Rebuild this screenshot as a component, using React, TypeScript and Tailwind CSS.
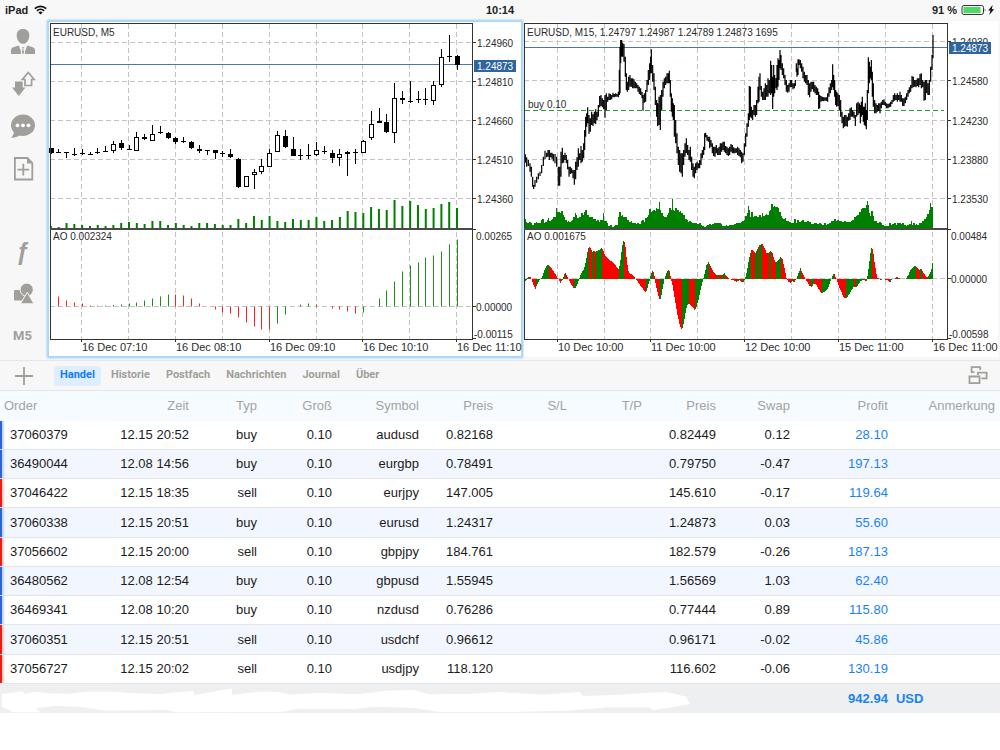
import type { ReactNode } from "react";

type Candle = [open: number, close: number, high: number, low: number, up?: boolean];

// M5 candles, canvas units (3 units = 1px), y measured from the top
const candles: Candle[] = [
    [443, 458, 443, 461], [457, 457, 448, 460], [457, 461, 457, 473], [461, 461, 445, 467],
    [459, 459, 447, 466], [461, 461, 456, 466], [455, 455, 445, 461], [452, 456, 437, 456],
    [433, 450, 424, 458, true], [429, 444, 419, 449], [446, 450, 434, 450], [411, 450, 396, 452, true],
    [410, 416, 401, 421], [401, 418, 376, 419, true], [397, 397, 378, 403], [399, 413, 396, 418],
    [414, 426, 411, 431], [423, 423, 411, 429], [426, 443, 424, 446], [446, 453, 435, 459],
    [451, 454, 451, 466], [450, 458, 450, 476], [460, 460, 452, 470], [463, 473, 446, 474],
    [478, 561, 474, 563], [529, 559, 529, 560, true], [517, 523, 507, 568, true], [499, 515, 478, 521, true],
    [458, 496, 448, 497, true], [406, 455, 394, 456, true], [409, 443, 390, 445], [447, 467, 410, 468],
    [466, 466, 448, 480], [464, 464, 433, 477], [451, 463, 425, 467, true], [452, 456, 439, 461],
    [458, 473, 451, 489], [463, 473, 448, 497, true], [455, 462, 454, 527], [455, 455, 448, 491],
    [423, 456, 419, 459, true], [373, 412, 333, 419, true], [363, 368, 325, 368], [367, 398, 343, 399],
    [295, 398, 249, 430, true], [295, 301, 273, 312], [304, 304, 244, 310], [297, 301, 273, 310],
    [298, 298, 264, 316], [254, 298, 244, 315, true], [171, 253, 147, 260, true], [168, 168, 106, 186],
    [169, 195, 166, 210],
];

const m5Volume = [
    3, 2, 6, 5, 4, 3, 4, 3, 4, 6, 7, 6, 5, 8, 8, 4, 6, 4, 3, 6, 6, 5, 4, 4, 10, 6, 13, 9, 13, 8, 7, 10,
    9, 9, 12, 8, 9, 12, 18, 17, 16, 22, 20, 19, 29, 23, 28, 24, 20, 21, 25, 27, 21,
];

const m5Ao = [
    0, 10, 6, 4, 3, 1, 0.8, 1, 1.5, 2, 3, 4, 6, 8, 10, 12, 11.9, 11, 8, 3, 0, -3, -6, -7, -11, -16, -20,
    -23, -23.1, -17, -8, 0, 2, 3, 2, 0, -2, -3, -5, -7, -6, 0, 8, 16, 25, 35, 41, 44, 49, 51, 55, 62, 67,
];

// M15 price range, flat [x, high, low] triples
const m15Early = [
    16, 403, 428, 20, 412, 440, 25, 420, 438, 30, 430, 455, 34, 440, 470, 38, 470, 500, 41, 495, 507,
    45, 480, 500, 50, 470, 488, 55, 460, 478, 60, 455, 468, 65, 435, 460, 70, 410, 438, 75, 392, 418,
    80, 398, 412, 84, 390, 410, 88, 390, 420, 92, 398, 412, 96, 398, 416, 100, 402, 424, 105, 402, 430,
    110, 410, 440, 115, 440, 497, 119, 440, 497, 123, 395, 470, 127, 383, 430, 131, 405, 428,
    135, 398, 420, 139, 405, 430, 143, 420, 448, 147, 440, 470, 151, 440, 462, 155, 445, 460,
    159, 450, 475, 163, 450, 494, 167, 425, 478, 171, 412, 450, 175, 385, 440, 179, 400, 420,
    183, 378, 430, 187, 390, 425, 191, 370, 415, 194, 330, 390, 197, 290, 350, 200, 280, 320,
    203, 262, 310, 207, 285, 342, 211, 295, 335, 215, 275, 315, 219, 283, 318, 223, 275, 310,
    227, 268, 312, 231, 275, 300, 235, 255, 290, 239, 228, 262, 243, 225, 258, 247, 235, 262,
    251, 240, 268, 255, 225, 293, 259, 220, 270, 263, 230, 245, 267, 220, 240, 271, 222, 240,
    275, 225, 238, 279, 218, 232, 283, 222, 232, 287, 220, 230, 291, 222, 230, 295, 215, 232,
    298, 150, 225, 300, 80, 220, 302, 60, 130, 305, 60, 110, 308, 68, 110, 312, 72, 125, 316, 110, 170,
    319, 160, 210, 322, 185, 215, 326, 170, 210, 330, 165, 200, 334, 175, 200, 338, 175, 205,
    342, 178, 205, 346, 185, 205, 350, 190, 205, 354, 195, 215, 358, 200, 222, 362, 205, 225,
    366, 215, 235, 369, 225, 272, 373, 220, 248, 377, 210, 245, 381, 180, 215, 385, 150, 195,
    389, 130, 180, 392, 110, 160, 394, 88, 160, 398, 135, 185, 402, 160, 210, 406, 200, 255,
    410, 240, 290, 413, 250, 318, 417, 230, 315, 421, 225, 330, 425, 210, 270, 429, 185, 230,
    433, 175, 205, 437, 170, 195, 441, 160, 190, 445, 160, 190, 448, 152, 190, 451, 180, 230,
    454, 220, 275, 457, 235, 290, 460, 250, 300, 463, 255, 350, 467, 300, 370, 471, 340, 400,
    475, 380, 435, 479, 390, 455, 483, 400, 460, 487, 400, 470, 491, 390, 435, 495, 370, 410,
    499, 355, 400, 503, 375, 405, 507, 390, 420, 511, 380, 425, 515, 410, 450, 519, 430, 470,
    523, 440, 475, 527, 430, 460, 531, 425, 450, 535, 430, 445, 539, 420, 445, 543, 400, 435,
    547, 390, 415, 551, 380, 405, 554, 340, 390, 557, 338, 352, 561, 345, 362, 565, 350, 365,
    569, 350, 385, 573, 360, 380, 577, 370, 400, 581, 380, 408, 585, 380, 410, 589, 375, 400,
    593, 385, 405, 597, 380, 405, 601, 370, 405, 605, 370, 395, 609, 365, 390, 613, 365, 395,
    617, 378, 400, 621, 380, 405, 625, 385, 408, 629, 380, 405, 633, 372, 395, 637, 375, 400,
    641, 382, 400, 645, 385, 400, 649, 385, 398, 653, 380, 405, 657, 385, 408, 661, 390, 412,
    665, 395, 430, 669, 400, 425, 673, 370, 405, 677, 340, 380, 681, 310, 350, 685, 280, 320,
    688, 198, 300, 691, 200, 290, 694, 260, 295, 698, 270, 300, 702, 255, 285, 706, 255, 290,
    710, 240, 285, 714, 200, 250, 717, 170, 245,
];

const m15Late = [
    30, 220, 270, 34, 258, 290, 38, 275, 300, 42, 265, 300, 46, 250, 300, 50, 255, 290, 54, 235, 290,
    58, 240, 280, 62, 182, 285, 65, 195, 280, 68, 230, 327, 71, 195, 290, 74, 225, 280, 78, 235, 265,
    81, 195, 270, 84, 175, 260, 87, 180, 240, 90, 150, 205, 93, 165, 210, 97, 190, 225, 101, 205, 235,
    105, 225, 255, 109, 240, 275, 113, 255, 278, 117, 250, 275, 121, 240, 262, 125, 240, 262,
    129, 250, 268, 133, 250, 265, 136, 240, 258, 139, 190, 215, 141, 205, 230, 144, 178, 225,
    147, 178, 195, 151, 180, 205, 155, 190, 215, 159, 200, 235, 163, 215, 245, 167, 225, 250,
    171, 225, 255, 175, 240, 285, 179, 250, 292, 183, 245, 275, 187, 245, 268, 191, 245, 275,
    195, 255, 280, 199, 260, 285, 203, 265, 285, 206, 275, 327, 209, 285, 325, 213, 288, 305,
    217, 290, 303, 221, 292, 304, 225, 292, 302, 229, 292, 303, 233, 280, 305, 237, 262, 290,
    241, 250, 280, 245, 240, 270, 248, 193, 262, 251, 225, 270, 254, 240, 290, 257, 270, 315,
    260, 275, 320, 264, 280, 318, 268, 285, 330, 272, 300, 350, 276, 335, 370, 280, 350, 385,
    284, 345, 380, 288, 345, 378, 292, 350, 380, 296, 340, 362, 300, 325, 360, 304, 322, 350,
    308, 330, 350, 312, 335, 355, 316, 345, 378, 320, 310, 350, 324, 305, 345, 328, 310, 340,
    331, 315, 370, 334, 305, 350, 337, 290, 345, 340, 320, 365, 343, 320, 375, 346, 310, 378,
    349, 330, 388, 352, 270, 360, 355, 172, 280, 358, 185, 250, 361, 200, 235, 364, 180, 240,
    367, 215, 290, 370, 250, 320, 374, 300, 340, 378, 310, 340, 382, 315, 335, 386, 310, 332,
    390, 310, 340, 394, 305, 325, 398, 300, 315, 402, 298, 315, 406, 305, 318, 410, 310, 325,
    414, 312, 325, 418, 310, 322, 422, 305, 320, 426, 300, 312, 430, 285, 305, 434, 280, 302,
    438, 285, 300, 442, 280, 305, 446, 285, 300, 450, 275, 305, 454, 285, 305, 458, 295, 318,
    462, 295, 318, 466, 290, 310, 470, 280, 300, 474, 270, 290, 478, 262, 280, 482, 255, 275,
    486, 228, 265, 490, 230, 262, 494, 240, 260, 498, 240, 262, 502, 235, 258, 506, 235, 262,
    510, 222, 255, 514, 220, 265, 518, 240, 262, 522, 245, 302, 526, 240, 300, 530, 240, 280,
    534, 250, 285, 538, 240, 285, 542, 200, 245, 546, 165, 210, 549, 105, 175,
];

// M15 volume, flat [x, top] pairs
const m15VolumeEarly = [
    16, 88, 20, 95, 25, 98, 30, 96, 35, 100, 40, 104, 45, 100, 50, 96, 55, 98, 60, 100, 65, 90, 70, 86,
    74, 98, 78, 96, 82, 90, 86, 84, 90, 92, 94, 90, 98, 86, 102, 82, 106, 80, 110, 55, 114, 65, 118, 66,
    122, 68, 126, 62, 130, 74, 134, 80, 138, 90, 142, 95, 146, 92, 150, 95, 154, 92, 158, 90, 162, 82,
    166, 68, 170, 76, 174, 85, 178, 80, 182, 80, 186, 70, 190, 75, 194, 66, 198, 60, 202, 75, 206, 74,
    210, 82, 214, 80, 218, 82, 222, 86, 226, 88, 230, 92, 234, 90, 238, 96, 242, 90, 246, 90, 251, 68,
    255, 92, 259, 94, 263, 100, 267, 108, 271, 106, 275, 105, 279, 110, 283, 107, 287, 104, 291, 104,
    295, 80, 298, 65, 301, 65, 304, 78, 308, 75, 312, 80, 316, 80, 320, 82, 325, 90, 330, 95, 335, 93,
    340, 100, 345, 98, 350, 103, 355, 99, 360, 102, 365, 94, 370, 90, 374, 96, 378, 84, 382, 80, 386, 74,
    390, 58, 394, 66, 398, 62, 402, 60, 406, 62, 410, 55, 414, 56, 418, 36, 422, 60, 426, 70, 430, 78,
    434, 80, 438, 82, 442, 74, 446, 68, 450, 55, 454, 60, 457, 28, 460, 60, 464, 62, 468, 55, 470, 44,
    474, 60, 478, 65, 482, 64, 486, 68, 490, 75, 494, 76, 498, 86, 502, 90, 506, 97, 510, 92, 515, 96,
    520, 100, 525, 98, 530, 98, 535, 103, 540, 100, 545, 104, 550, 108, 556, 110, 560, 107, 565, 106,
    570, 102, 575, 104, 580, 101, 585, 100, 590, 98, 595, 100, 600, 100, 605, 103, 610, 107, 615, 108,
    620, 105, 625, 108, 630, 105, 635, 104, 640, 106, 645, 102, 650, 100, 655, 100, 660, 98, 665, 96,
    670, 92, 674, 90, 678, 78, 682, 68, 685, 48, 688, 60, 692, 80, 696, 66, 700, 80, 704, 78, 708, 78,
    712, 82, 716, 80,
];

const m15VolumeLate = [
    30, 76, 34, 80, 38, 70, 42, 78, 46, 75, 50, 72, 54, 76, 58, 62, 62, 60, 66, 42, 70, 52, 74, 48,
    78, 50, 82, 52, 86, 54, 90, 66, 94, 78, 98, 85, 102, 86, 106, 84, 110, 94, 114, 92, 118, 95, 122, 96,
    126, 100, 130, 98, 135, 88, 140, 100, 145, 90, 150, 96, 155, 94, 160, 90, 165, 95, 170, 96, 175, 93,
    180, 96, 185, 102, 190, 103, 195, 100, 200, 98, 205, 103, 210, 100, 215, 103, 220, 106, 225, 100,
    230, 104, 235, 102, 240, 98, 245, 92, 250, 94, 255, 86, 260, 94, 265, 90, 270, 94, 275, 93, 280, 96,
    285, 92, 290, 96, 295, 95, 300, 97, 305, 94, 310, 90, 315, 82, 320, 78, 325, 74, 330, 65, 335, 58,
    340, 54, 345, 55, 349, 46, 352, 34, 355, 46, 358, 70, 362, 78, 366, 64, 370, 78, 375, 92, 380, 94,
    385, 100, 390, 97, 395, 99, 400, 106, 405, 108, 410, 107, 415, 108, 420, 98, 425, 104, 430, 102,
    435, 100, 440, 104, 445, 100, 450, 98, 455, 103, 460, 98, 465, 104, 470, 108, 475, 105, 480, 103,
    484, 92, 488, 104, 492, 100, 496, 106, 500, 102, 505, 104, 510, 100, 515, 98, 520, 92, 525, 86,
    530, 82, 534, 72, 537, 60, 540, 40, 543, 52, 547, 50,
];

// M15 awesome oscillator, flat [x, y] pairs, zero line at 267
const m15AoEarly = [
    13, 274, 16, 272, 20, 266, 25, 258, 30, 262, 34, 268, 38, 282, 45, 296, 52, 280, 58, 268, 64, 264,
    70, 245, 76, 230, 84, 224, 92, 232, 100, 245, 108, 258, 113, 266, 120, 278, 127, 267, 134, 248,
    140, 260, 145, 268, 152, 282, 160, 295, 166, 294, 172, 280, 178, 262, 184, 245, 190, 238, 196, 215,
    201, 185, 206, 168, 210, 175, 215, 185, 220, 183, 226, 185, 232, 182, 238, 178, 243, 174, 248, 180,
    254, 198, 262, 206, 270, 212, 280, 220, 288, 230, 295, 238, 300, 210, 305, 170, 310, 148, 315, 170,
    320, 220, 325, 248, 332, 252, 340, 258, 346, 268, 354, 278, 362, 290, 370, 300, 377, 307, 382, 290,
    388, 268, 392, 250, 397, 240, 402, 258, 406, 285, 412, 310, 419, 333, 424, 310, 430, 275, 436, 255,
    442, 240, 446, 238, 450, 258, 456, 285, 462, 320, 470, 370, 478, 405, 484, 420, 490, 400, 495, 370,
    500, 345, 505, 340, 510, 345, 516, 350, 523, 362, 528, 350, 534, 330, 540, 300, 546, 275, 552, 252,
    558, 225, 565, 216, 572, 232, 580, 248, 588, 256, 596, 254, 604, 256, 612, 250, 620, 260, 628, 268,
    640, 270, 648, 276, 656, 270, 668, 278, 674, 266, 680, 240, 686, 205, 692, 180, 698, 182, 704, 190,
    710, 180, 716, 165,
];

const m15AoLate = [
    28, 167, 34, 160, 40, 170, 48, 188, 54, 190, 60, 183, 66, 190, 72, 210, 76, 218, 82, 212, 90, 202,
    96, 208, 102, 235, 108, 264, 114, 276, 120, 278, 126, 274, 132, 276, 138, 266, 144, 250, 150, 235,
    156, 248, 162, 262, 168, 272, 176, 286, 182, 291, 190, 282, 198, 284, 206, 300, 214, 311, 222, 305,
    232, 295, 238, 280, 243, 266, 250, 248, 256, 262, 262, 280, 270, 300, 280, 324, 287, 326, 295, 315,
    303, 300, 310, 290, 317, 293, 325, 280, 332, 272, 340, 270, 347, 275, 350, 266, 355, 230, 360, 190,
    364, 168, 368, 185, 374, 230, 380, 262, 390, 270, 398, 267, 410, 270, 418, 277, 426, 268, 432, 266,
    438, 260, 444, 264, 452, 266, 466, 266, 472, 258, 480, 240, 488, 230, 495, 227, 502, 236, 508, 240,
    513, 236, 520, 250, 526, 260, 532, 262, 538, 250, 543, 238, 547, 214,
];

const LATE_OFFSET = 690;
const AO_ZERO = 267;

const pairs = (flat: number[], offset = 0) => {
    const points: [number, number][] = [];
    for (let i = 0; i < flat.length; i += 2) points.push([flat[i] + offset, flat[i + 1]]);
    return points;
};

const priceBars = (flat: number[]) => {
    let d = "";
    for (let i = 0; i < flat.length; i += 3) d += `M${flat[i]} ${flat[i + 1]}V${flat[i + 2]}`;
    return d;
};

const volumePoints = [...pairs(m15VolumeEarly), ...pairs(m15VolumeLate, LATE_OFFSET)];
const volumeArea =
    "M15 117" + volumePoints.map(([x, y]) => `V${y}H${x + 2}`).join("") + "V117Z";

// green while the oscillator rises, red while it falls
const aoBars = () => {
    const points = [...pairs(m15AoEarly), ...pairs(m15AoLate, LATE_OFFSET)];
    let green = "";
    let red = "";
    let k = 1;
    for (let x = 15; x <= 1236; x += 3) {
        while (k < points.length - 1 && points[k][0] < x) k++;
        const [x0, y0] = points[k - 1];
        const [x1, y1] = points[k];
        const y = Math.round(y0 + ((y1 - y0) * (x - x0)) / (x1 - x0));
        const bar = `M${x} ${AO_ZERO}V${y}h3V${AO_ZERO}Z`;
        if (y1 <= y0) green += bar;
        else red += bar;
    }
    return { green, red };
};

const m15Ao = aoBars();

const trades = [
    ["37060379", "12.15 20:52", "buy", "0.10", "audusd", "0.82168", "0.82449", "0.12", "28.10"],
    ["36490044", "12.08 14:56", "buy", "0.10", "eurgbp", "0.78491", "0.79750", "-0.47", "197.13"],
    ["37046422", "12.15 18:35", "sell", "0.10", "eurjpy", "147.005", "145.610", "-0.17", "119.64"],
    ["37060338", "12.15 20:51", "buy", "0.10", "eurusd", "1.24317", "1.24873", "0.03", "55.60"],
    ["37056602", "12.15 20:00", "sell", "0.10", "gbpjpy", "184.761", "182.579", "-0.26", "187.13"],
    ["36480562", "12.08 12:54", "buy", "0.10", "gbpusd", "1.55945", "1.56569", "1.03", "62.40"],
    ["36469341", "12.08 10:20", "buy", "0.10", "nzdusd", "0.76286", "0.77444", "0.89", "115.80"],
    ["37060351", "12.15 20:51", "sell", "0.10", "usdchf", "0.96612", "0.96171", "-0.02", "45.86"],
    ["37056727", "12.15 20:02", "sell", "0.10", "usdjpy", "118.120", "116.602", "-0.06", "130.19"],
];

const columns = [
    { name: "Order", width: "w-[11%]" },
    { name: "Zeit", width: "w-[7.9%]" },
    { name: "Typ", width: "w-[6.8%]" },
    { name: "Groß", width: "w-[7.5%]" },
    { name: "Symbol", width: "w-[8.7%]" },
    { name: "Preis", width: "w-[7.4%]" },
    { name: "S/L", width: "w-[7.4%]" },
    { name: "T/P", width: "w-[7.5%]" },
    { name: "Preis", width: "w-[7.4%]" },
    { name: "Swap", width: "w-[7.4%]" },
    { name: "Profit", width: "w-[9.8%]" },
    { name: "Anmerkung", width: "w-[11.2%]" },
];

const tabs = ["Handel", "Historie", "Postfach", "Nachrichten", "Journal", "Über"];

const StatusBar = () => (
    <header className="grid h-5 grid-cols-3 items-center bg-[#f8f8f8] px-[5px] text-[11px] font-bold text-[#222]">
        <div className="flex items-center gap-1.5">
            <span>iPad</span>
            <svg width="13" height="10" viewBox="0 0 13 10" fill="none" stroke="#111" strokeWidth="1.7">
                <path d="M.8 3.6a8.2 8.2 0 0 1 11.4 0M2.9 5.9a5.2 5.2 0 0 1 7.2 0" />
                <path d="M4.4 7.5a3 3 0 0 1 4.2 0L6.5 9.6z" fill="#111" stroke="none" />
            </svg>
        </div>
        <span className="text-center">10:14</span>
        <div className="flex items-center justify-end gap-1">
            <span>91 %</span>
            <svg width="34" height="12" viewBox="0 0 34 12">
                <rect x="1" y="1.5" width="21.5" height="9" rx="2" fill="none" stroke="#333" />
                <rect x="2.5" y="3" width="17" height="6" fill="#4cd964" />
                <path d="M23.8 4.2q1.4 1.8 0 3.6z" fill="#333" />
                <path d="M31.6 1 27.2 6.6h2.3L28.2 11l5-5.8h-2.4z" fill="#111" />
            </svg>
        </div>
    </header>
);

const SideButton = ({ label, children }: { label: string; children: ReactNode }) => (
    <button
        type="button"
        aria-label={label}
        className="flex h-[42px] w-full items-center justify-center text-[#a09f9a]"
    >
        {children}
    </button>
);

const Icon = ({ children }: { children: ReactNode }) => (
    <svg width="26" height="26" viewBox="0 0 26 26" fill="currentColor">
        {children}
    </svg>
);

const Sidebar = () => (
    <nav className="flex w-12 shrink-0 flex-col pr-[3px]">
        <SideButton label="Konto">
            <Icon>
                <path d="M13 0c4 0 6.3 2.6 6.3 6.2 0 3.8-2.3 8.6-6.3 8.6S6.7 10 6.7 6.2C6.7 2.6 9 0 13 0z" />
                <path d="M1 25v-3.5c0-2 1-2.8 3-3.4l4.8-1.5L12 25zM25 25v-3.5c0-2-1-2.8-3-3.4l-4.8-1.5L14 25z" />
                <path d="M11.4 17.5h3.2l-.8 2 1 5.5h-3.6l1-5.5z" stroke="#f7f7f7" />
            </Icon>
        </SideButton>
        <SideButton label="Kurse">
            <Icon>
                <path d="M5 10.5h7.7v6h2.8L8.7 25 2 16.5h3z" />
                <path
                    d="M18.3 1.5 24.3 8.5H21.6V14.5H15V8.5H12.3z"
                    fill="none"
                    stroke="currentColor"
                    strokeWidth="1.7"
                />
            </Icon>
        </SideButton>
        <SideButton label="Chat">
            <Icon>
                <ellipse cx="13" cy="12.3" rx="12" ry="10.7" />
                <path d="M4 17c.3 3-.8 5.5-3 7.8 3.5.2 7-1 10-3z" />
                <g fill="#fff">
                    <circle cx="7.5" cy="12.3" r="1.9" />
                    <circle cx="13" cy="12.3" r="1.9" />
                    <circle cx="18.5" cy="12.3" r="1.9" />
                </g>
            </Icon>
        </SideButton>
        <SideButton label="Neue Order">
            <Icon>
                <g fill="none" stroke="currentColor" strokeWidth="1.8">
                    <path d="M4.9 3h12.6l4.8 5v16.5H4.9z" />
                    <path d="M13.3 8.8v11.6M7.5 14.6h11.6" />
                </g>
                <path d="M17 3v5.6h5.5z" />
            </Icon>
        </SideButton>
        <div className="mt-auto pb-[3px]">
            <SideButton label="Indikatoren">
                <span className="font-['Liberation_Sans',sans-serif] text-2xl leading-none font-bold italic">ƒ</span>
            </SideButton>
            <SideButton label="Objekte">
                <Icon>
                    <rect x="4" y="9" width="11" height="10.5" rx="1" />
                    <circle cx="16.7" cy="8.7" r="6.6" stroke="#f7f7f7" />
                    <path d="M17.2 11.3 24 22.8H10.4z" stroke="#f7f7f7" />
                </Icon>
            </SideButton>
            <SideButton label="Zeitrahmen">
                <span className="font-['Roboto',sans-serif] text-[13px] font-bold">M5</span>
            </SideButton>
        </div>
    </nav>
);

type ChartProps = {
    viewX: number;
    left: number;
    right: number;
    title: string;
    indicator: string;
    gridX: number[];
    gridY: number[];
    zeroY: number;
    prices: string[];
    dates: string[];
    range: [string, string];
    priceY: number;
    badgeY: number;
    children: ReactNode;
};

// frame, grid and axis labels shared by both charts, 474 x 336 canvas
const Chart = (props: ChartProps) => {
    const { viewX, left, right, title, indicator, gridX, gridY, zeroY, prices, dates, range, priceY, badgeY } = props;
    const labelX = right + 5;

    return (
        <svg
            viewBox={`${viewX} 21 474 336`}
            className="block h-auto w-full overflow-visible"
            fontFamily="Liberation Sans, Arial, sans-serif"
            fontSize="10"
            fill="#2b2b2b"
            role="img"
            aria-label={title}
        >
            <g stroke="#c4c4c4" strokeDasharray="5 3" shapeRendering="crispEdges">
                {gridX.map((x) => (
                    <path key={x} d={`M${x + 0.5} 24V339`} />
                ))}
                {[...gridY, zeroY].map((y) => (
                    <path key={y} d={`M${left} ${y + 0.5}H${right}`} />
                ))}
            </g>
            <path d={`M${left} ${priceY + 0.5}H${right}`} stroke="#4a78ad" />
            {props.children}
            <g fill="none" stroke="#333" shapeRendering="crispEdges">
                <path d={`M${left + 0.5} 339.5V23.5H${right + 0.5}V339.5Z`} />
                <path d={`M${left} 229H${right}`} strokeWidth="2" stroke="#4a4a4a" />
                {[...gridY, 229, zeroY, 338].map((y) => (
                    <path key={y} d={`M${right} ${y + 0.5}h4`} />
                ))}
                {gridX.map((x, i) => i % 2 === 0 && <path key={x} d={`M${x + 0.5} 339v3`} />)}
            </g>
            <text x={left + 3} y="36">{title}</text>
            <text x={left + 3} y="240">{indicator}</text>
            {prices.map((price, i) => (
                <text key={price} x={labelX} y={gridY[i] + 5}>{price}</text>
            ))}
            <text x={labelX - 1} y="240">{range[0]}</text>
            <text x={labelX - 1} y={zeroY + 5}>0.00000</text>
            <text x={labelX - 3} y="338">{range[1]}</text>
            <g fontSize="11">
                {dates.map((date, i) => (
                    <text key={date} x={gridX[i * 2] + 1} y="351">{date}</text>
                ))}
            </g>
            <rect x={right + 2} y={badgeY} width="42" height="12" fill="#2f659c" />
            <text x={labelX} y={badgeY + 10} fill="#fff">1.24873</text>
        </svg>
    );
};

const candleX = (i: number) => 50.5 + 7.81 * i;

const CandleChart = () => (
    <Chart
        viewX={48}
        left={50}
        right={472}
        title="EURUSD, M5"
        indicator="AO 0.002324"
        gridX={[81, 128, 175, 222, 269, 316, 362, 409, 456]}
        gridY={[42, 81, 120, 159, 198]}
        zeroY={306}
        prices={["1.24960", "1.24810", "1.24660", "1.24510", "1.24360"]}
        dates={["16 Dec 07:10", "16 Dec 08:10", "16 Dec 09:10", "16 Dec 10:10", "16 Dec 11:10"]}
        range={["0.00265", "-0.00115"]}
        priceY={64}
        badgeY={60}
    >
        {candles.map(([top, bottom, high, low, up], i) => {
            const x = Math.round(candleX(i)) + 0.5;
            const y = Math.round(top / 3);
            const h = Math.max(1, Math.round((bottom - top) / 3));
            return (
                <g key={i} stroke="#000" shapeRendering="crispEdges">
                    <path d={`M${x} ${Math.round(high / 3)}V${Math.round(low / 3)}`} />
                    {up ? (
                        <rect x={x - 2} y={y + 0.5} width="4" height={h} fill="#fff" />
                    ) : (
                        <rect x={x - 2.5} y={y} width="5" height={h} fill="#000" stroke="none" />
                    )}
                </g>
            );
        })}
        {m5Volume.map((v, i) => (
            <rect key={i} x={candleX(i) - 0.6} y={229 - v} width="2" height={v} fill="#008000" />
        ))}
        {m5Ao.map((v, i) => (
            <rect
                key={i}
                x={Math.round(candleX(i))}
                y={v > 0 ? 306.5 - v : 306.5}
                width="1"
                height={Math.abs(v)}
                fill={i > 1 && v > m5Ao[i - 1] ? "#1d8f1d" : "#f22"}
            />
        ))}
    </Chart>
);

const BarChart = () => (
    <Chart
        viewX={524}
        left={524}
        right={947}
        title="EURUSD, M15, 1.24797 1.24987 1.24789 1.24873 1695"
        indicator="AO 0.001675"
        gridX={[557, 604, 650, 697, 744, 791, 838, 885, 932]}
        gridY={[41, 80, 120, 159, 198]}
        zeroY={278}
        prices={["1.24930", "1.24580", "1.24230", "1.23880", "1.23530"]}
        dates={["10 Dec 10:00", "11 Dec 10:00", "12 Dec 10:00", "15 Dec 11:00", "16 Dec 11:00"]}
        range={["0.00484", "-0.00598"]}
        priceY={47}
        badgeY={42}
    >
        <path d="M525 110.5H944" stroke="#2ca02c" strokeDasharray="5 3" />
        <text x="528" y="108">buy 0.10</text>
        <g stroke="#000" strokeWidth="3.6">
            <path transform="translate(520 20) scale(.33333)" d={priceBars(m15Early)} />
            <path transform="translate(750 0) scale(.33333)" d={priceBars(m15Late)} />
        </g>
        <g transform="translate(520 190) scale(.33333)" shapeRendering="crispEdges">
            <path d={volumeArea} fill="#008000" />
            <path d={m15Ao.green} fill="#008000" />
            <path d={m15Ao.red} fill="#f00" />
        </g>
    </Chart>
);

const Toolbar = () => (
    <div className="flex h-[31px] items-center border-y border-[#e6e6e8] bg-[#f7f7f7] text-[#a09f9a]">
        <button type="button" aria-label="Hinzufügen" className="flex w-12 justify-center">
            <svg width="18" height="18" viewBox="0 0 18 18" stroke="currentColor" strokeWidth="1.8">
                <path d="M9 0v18M0 9h18" />
            </svg>
        </button>
        <div className="ml-1.5 flex gap-1 font-['Roboto',sans-serif] text-[11px] font-bold">
            {tabs.map((tab) => (
                <button
                    key={tab}
                    type="button"
                    className={
                        tab === "Handel"
                            ? "h-5 rounded-sm bg-[#dfeeff] px-1.5 text-[#0f7cff]"
                            : "h-5 px-1.5"
                    }
                >
                    {tab}
                </button>
            ))}
        </div>
        <button type="button" aria-label="Fenster" className="mr-3 ml-auto">
            <svg width="20" height="19" viewBox="0 0 20 19" fill="none" stroke="currentColor" strokeWidth="1.8">
                <path d="M1.5 10.5h10v6.6h-10zM6.5 6.2H3.6V1.2h8.6v2.9M10 9V6.7h8.6v5.6h-5.2" />
            </svg>
        </button>
    </div>
);

const TradeTable = () => (
    <table className="h-[322px] w-full table-fixed border-collapse text-right text-[13px] leading-4 text-[#1c1c1c]">
        <colgroup>
            {columns.map((column, i) => (
                <col key={i} className={column.width} />
            ))}
        </colgroup>
        <thead>
            <tr className="h-[30px] bg-[#f6fbff] text-[#a3a3a3]">
                {columns.map((column, i) => (
                    <th key={i} className="p-0 font-normal first:pl-1 first:text-left last:pr-[5px]">
                        {column.name}
                    </th>
                ))}
            </tr>
        </thead>
        <tbody>
            {trades.map(([order, time, type, size, symbol, open, price, swap, profit]) => (
                <tr key={order} className="border-b border-[#e4e5e9] even:bg-[#f2f7ff]">
                    <td
                        className={
                            type === "buy"
                                ? "p-0 pl-2.5 text-left shadow-[inset_2px_0_0_#2b63dc,inset_5px_0_2px_-1px_#c3d4f8]"
                                : "p-0 pl-2.5 text-left shadow-[inset_2px_0_0_#ee1c10,inset_5px_0_2px_-1px_#fbcac6]"
                        }
                    >
                        {order}
                    </td>
                    <td className="p-0 whitespace-nowrap">{time}</td>
                    <td className="p-0">{type}</td>
                    <td className="p-0">{size}</td>
                    <td className="p-0">{symbol}</td>
                    <td className="p-0">{open}</td>
                    <td className="p-0" />
                    <td className="p-0" />
                    <td className="p-0">{price}</td>
                    <td className="p-0">{swap}</td>
                    <td className="p-0 text-[#1a82f7]">{profit}</td>
                    <td className="p-0" />
                </tr>
            ))}
        </tbody>
        <tfoot>
            <tr className="h-[29px] bg-[#eeeff0] font-bold text-[#1a82f7]">
                <td colSpan={9} className="p-0">
                    <svg viewBox="0 132 2148 87" className="block h-auto w-full" fill="#fff" aria-hidden="true">
                        <path d="M5 162 65 154 75 162 100 155 150 160 200 162 260 155H350L400 160 480 162 540 156 580 153V165L615 160 695 145 697 165 770 155H830L875 164 960 158 1070 163 1160 152 1240 150 1290 163 1400 162 1500 155 1550 160 1630 164 1740 156 1750 168 1860 164 1950 158 2000 156 2060 170 2070 192 2000 205 1960 210 1950 202H1830L1700 212 1530 216H1320L1240 204 1120 200 1060 208 900 206 840 216 530 217 500 210 320 212 230 200 170 197 108 205 120 217H40L5 200Z" />
                    </svg>
                </td>
                <td className="p-0" />
                <td className="p-0">942.94</td>
                <td className="p-0 pl-2 text-left">USD</td>
            </tr>
        </tfoot>
    </table>
);

const App = () => {
    return (
        <div className="min-h-screen bg-white font-['Liberation_Sans',Arial,sans-serif]">
            <StatusBar />
            <main>
                <section className="flex bg-[#f7f7f7] pt-px pr-[2px]">
                    <Sidebar />
                    <div className="grid min-w-0 flex-1 grid-cols-2 gap-[2px] pb-[3px]">
                        <div className="bg-white shadow-[0_0_2px_1px_#8fcbf7] ring-1 ring-[#a9d8fb] ring-inset">
                            <CandleChart />
                        </div>
                        <div className="bg-white">
                            <BarChart />
                        </div>
                    </div>
                </section>
                <Toolbar />
                <TradeTable />
            </main>
        </div>
    );
};

export default App;
